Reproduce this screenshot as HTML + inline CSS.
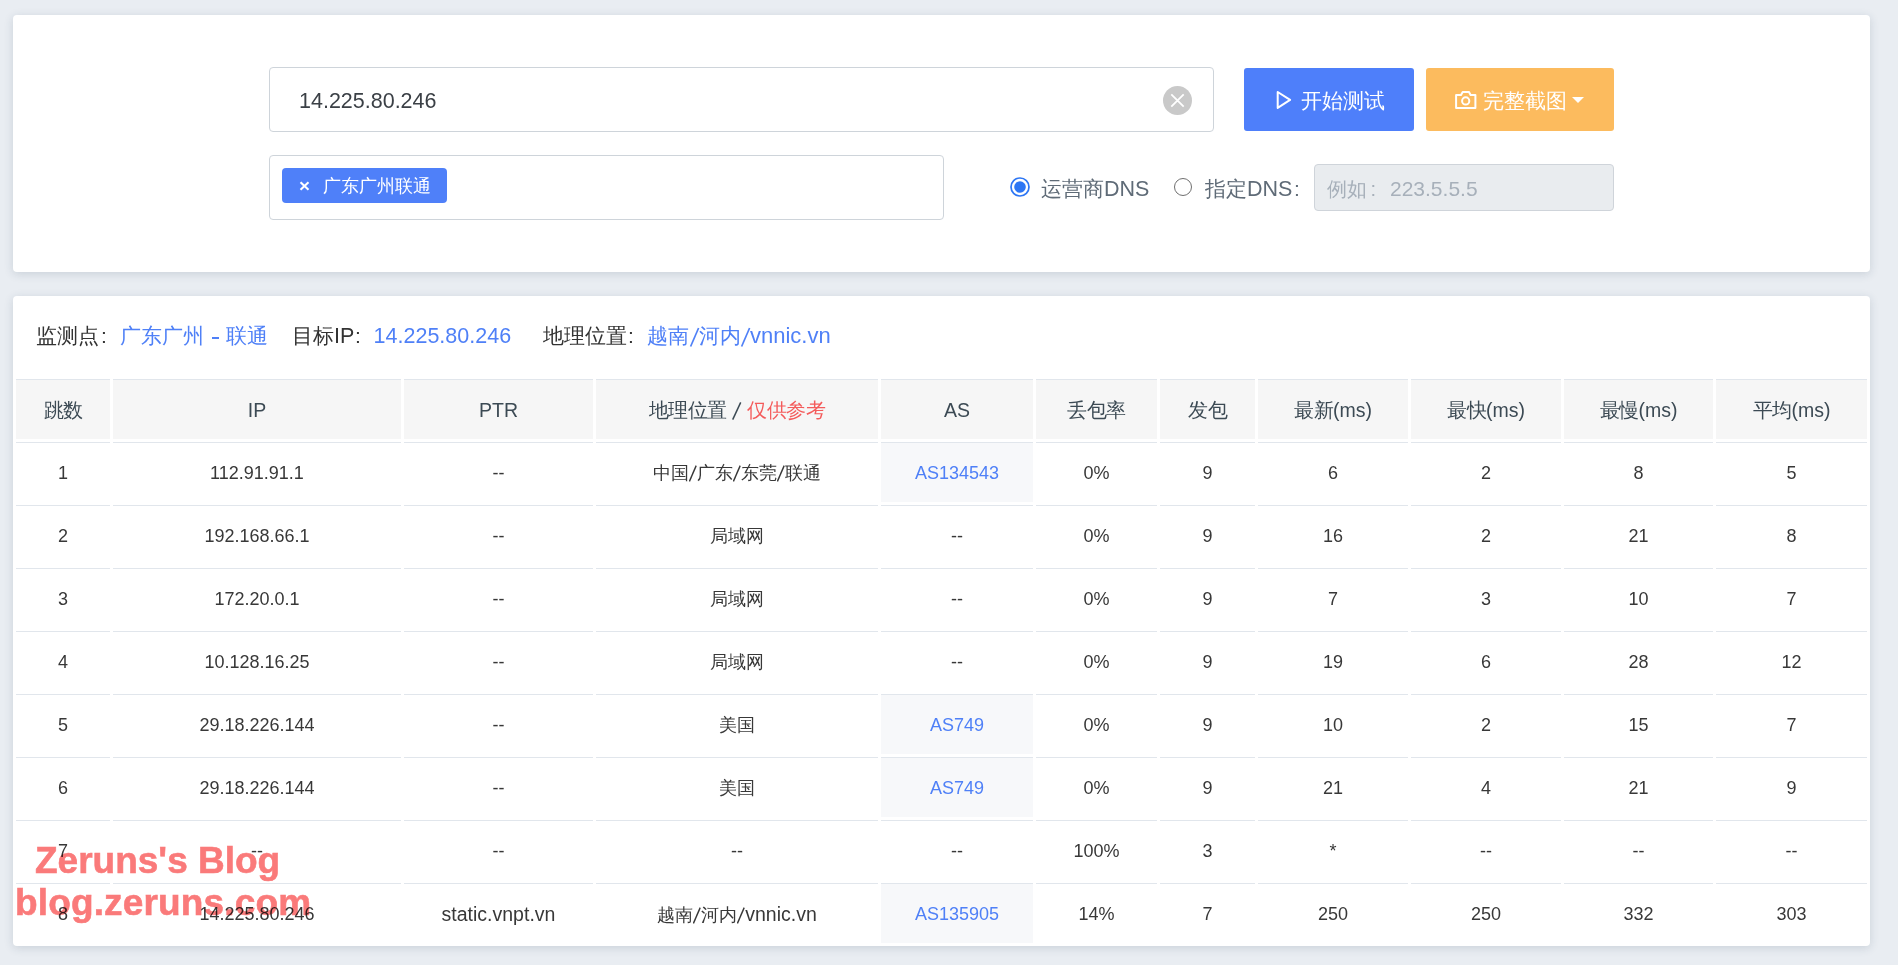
<!DOCTYPE html>
<html><head><meta charset="utf-8">
<style>
*{margin:0;padding:0;box-sizing:border-box}
html,body{width:1898px;height:965px;overflow:hidden}
body{background:#e9edf2;font-family:"Liberation Sans",sans-serif;color:#333;position:relative}
.card{position:absolute;left:13px;width:1857px;background:#fff;border-radius:4px;box-shadow:0 2px 10px rgba(40,60,90,.16)}
.card1{top:15px;height:257px}
.card2{top:296px;height:650px}
.abs{position:absolute;white-space:nowrap}
.inp{position:absolute;left:269px;top:67px;width:945px;height:65px;border:1px solid #ced4da;border-radius:4px;background:#fff}
.inp .val{position:absolute;left:29px;top:1px;line-height:64px;font-size:21.5px;color:#3b4046}
.clr{position:absolute;left:1163px;top:85.8px;width:29px;height:29px;border-radius:50%;background:#c9c9c9}
.btn{position:absolute;top:68px;height:63px;border-radius:3px;color:#fff;font-size:21px;line-height:63px}
.b1{left:1244px;width:170px;background:#4e7ffa}
.b2{left:1426px;width:188px;background:#fcbb5e}
.sel{position:absolute;left:269px;top:155px;width:675px;height:65px;border:1px solid #ced4da;border-radius:4px;background:#fff}
.tag{position:absolute;left:12px;top:12px;width:165px;height:35px;background:#4f80f9;border-radius:4px;color:#fff;font-size:18px;line-height:35px}
.radio{position:absolute;border-radius:50%}
.rtxt{position:absolute;top:173.5px;font-size:20px;line-height:30px;color:#5f6b77}
.dns{position:absolute;left:1314px;top:164px;width:300px;height:47px;background:#e9ecef;border:1px solid #cfd4da;border-radius:4px;color:#a7b0ba;font-size:20px;line-height:45px;padding-left:12px}
.info{position:absolute;line-height:30px;color:#333;white-space:nowrap}
.rt{color:#5f6b77}
.ph{color:#a7b0ba}
.slash{font-size:21.5px;transform:scaleX(1.5);transform-origin:0 50%}
.blue{color:#4f80f7}
.red{color:#f45b5b}
.c{position:absolute;height:60px;border-top:1px solid #e1e6ec;text-align:center;line-height:61px;white-space:nowrap}
.th{background:#f6f6f6;color:#3c4a54;font-size:19.5px}
.td{font-size:18px;color:#383838;background:#fff}
.as{background:#f7f8fa;color:#4f80f7}
.sl{vertical-align:-3px;margin:0 0.2px}
.hsl{vertical-align:-3px}
.lw{font-size:19.5px}
.wm{position:absolute;font-weight:bold;color:#fa7a7a;font-size:37px;-webkit-text-stroke:0.6px #fa7a7a;mix-blend-mode:multiply;white-space:nowrap;line-height:40px}
.k{display:inline-block;width:1em;text-align:center;font-style:normal}
</style></head><body>
<div class="card card1"></div>
<div class="card card2"></div>

<div class="inp"><div class="val">14.225.80.246</div></div>
<div class="clr"><svg width="29" height="29" viewBox="0 0 29 29"><path d="M8.3 8.3 L20.7 20.7 M20.7 8.3 L8.3 20.7" stroke="#fff" stroke-width="1.8"/></svg></div>

<div class="btn b1">
 <svg class="abs" style="left:31px;top:22px" width="18" height="20" viewBox="0 0 18 20"><path d="M2.7 2 L15.1 9.95 L2.7 17.9 Z" fill="none" stroke="#fff" stroke-width="2" stroke-linejoin="round"/></svg>
 <span class="abs" style="left:56.5px;top:1px"><i class="k">开</i><i class="k">始</i><i class="k">测</i><i class="k">试</i></span>
</div>
<div class="btn b2">
 <svg class="abs" style="left:28px;top:22px" width="24" height="21" viewBox="0 0 24 21"><path d="M2.1 5 H7 L8.7 2 H15 L16.6 5 H21.4 V18 H2.1 Z" fill="none" stroke="#fff" stroke-width="2" stroke-linejoin="round"/><circle cx="11.7" cy="10.9" r="3.6" fill="none" stroke="#fff" stroke-width="2"/></svg>
 <span class="abs" style="left:56.5px;top:0.5px"><i class="k">完</i><i class="k">整</i><i class="k">截</i><i class="k">图</i></span>
 <svg class="abs" style="left:146px;top:29px" width="12" height="6" viewBox="0 0 12 6"><path d="M0 0 H12 L6 6 Z" fill="#fff"/></svg>
</div>

<div class="sel"><div class="tag"><svg class="abs" style="left:17px;top:13px" width="11" height="10" viewBox="0 0 11 10"><path d="M1.5 1.3 L9.5 8.8 M9.5 1.3 L1.5 8.8" stroke="#fff" stroke-width="2.1"/></svg><span class="abs" style="left:41px;top:1px;font-size:18px"><i class="k">广</i><i class="k">东</i><i class="k">广</i><i class="k">州</i><i class="k">联</i><i class="k">通</i></span></div></div>

<svg style="position:absolute;left:1009.8px;top:176.9px" width="20" height="20" viewBox="0 0 20 20"><circle cx="10" cy="10" r="9" fill="none" stroke="#2d76f4" stroke-width="1.7"/><circle cx="10" cy="10" r="5.8" fill="#2d76f4"/></svg>
<div class="radio" style="left:1174px;top:178px;width:18px;height:18px;border:1.8px solid #6f6f6f"></div>
<div class="dns"></div>

<div class="info " style="left:36px;top:321px;font-size:21px"><i class="k">监</i><i class="k">测</i><i class="k">点</i></div>
<div class="info " style="left:101px;top:321px;font-size:21px">:</div>
<div class="info blue" style="left:120px;top:321px;font-size:21px"><i class="k">广</i><i class="k">东</i><i class="k">广</i><i class="k">州</i></div>
<div class="info blue" style="left:226px;top:321px;font-size:21px"><i class="k">联</i><i class="k">通</i></div>
<div class="info " style="left:292px;top:321px;font-size:21px"><i class="k">目</i><i class="k">标</i></div>
<div class="info " style="left:334px;top:321px;font-size:21.5px">IP</div>
<div class="info " style="left:355px;top:321px;font-size:21px">:</div>
<div class="info blue" style="left:373.6px;top:321px;font-size:21.5px">14.225.80.246</div>
<div class="info " style="left:543px;top:321px;font-size:21px"><i class="k">地</i><i class="k">理</i><i class="k">位</i><i class="k">置</i></div>
<div class="info " style="left:628px;top:321px;font-size:21px">:</div>
<div class="info blue" style="left:647px;top:321px;font-size:21px"><i class="k">越</i><i class="k">南</i></div>
<div class="info blue" style="left:699px;top:321px;font-size:21px"><i class="k">河</i><i class="k">内</i></div>
<div class="info blue" style="left:750px;top:321px;font-size:22px">vnnic.vn</div>
<div class="info rt" style="left:1041px;top:173.5px;font-size:21px"><i class="k">运</i><i class="k">营</i><i class="k">商</i></div>
<div class="info rt" style="left:1104px;top:173.5px;font-size:21.5px">DNS</div>
<div class="info rt" style="left:1205px;top:173.5px;font-size:21px"><i class="k">指</i><i class="k">定</i></div>
<div class="info rt" style="left:1247px;top:173.5px;font-size:21.5px">DNS</div>
<div class="info rt" style="left:1294px;top:173.5px;font-size:21px">:</div>
<div class="info ph" style="left:1327px;top:174px;font-size:20px"><i class="k">例</i><i class="k">如</i></div>
<div class="info ph" style="left:1370.5px;top:174px;font-size:20px">:</div>
<div class="info ph" style="left:1390px;top:174px;font-size:21px">223.5.5.5</div>
<div style="position:absolute;left:212px;top:337px;width:7px;height:2px;background:#4f80f7"></div>
<svg style="position:absolute;left:688px;top:326px" width="13" height="22"><path d="M2.6 20.5 L10.6 2" stroke="#4f80f7" stroke-width="1.7"/></svg>
<svg style="position:absolute;left:738.5px;top:326px" width="13" height="22"><path d="M2.6 20.5 L10.6 2" stroke="#4f80f7" stroke-width="1.7"/></svg>

<div class="c th" style="left:16px;top:379px;width:94px"><i class="k">跳</i><i class="k">数</i></div>
<div class="c th" style="left:113px;top:379px;width:288px">IP</div>
<div class="c th" style="left:404px;top:379px;width:189px">PTR</div>
<div class="c th" style="left:596px;top:379px;width:282px"><i class="k">地</i><i class="k">理</i><i class="k">位</i><i class="k">置</i> <svg class="hsl" width="9.4" height="18" viewBox="0 0 9.4 18"><path d="M0.7 17.6 L8.7 0.4" stroke="currentColor" stroke-width="1.5"/></svg> <span class="red"><i class="k">仅</i><i class="k">供</i><i class="k">参</i><i class="k">考</i></span></div>
<div class="c th" style="left:881px;top:379px;width:152px">AS</div>
<div class="c th" style="left:1036px;top:379px;width:121px"><i class="k">丢</i><i class="k">包</i><i class="k">率</i></div>
<div class="c th" style="left:1160px;top:379px;width:95px"><i class="k">发</i><i class="k">包</i></div>
<div class="c th" style="left:1258px;top:379px;width:150px"><i class="k">最</i><i class="k">新</i>(ms)</div>
<div class="c th" style="left:1411px;top:379px;width:150px"><i class="k">最</i><i class="k">快</i>(ms)</div>
<div class="c th" style="left:1564px;top:379px;width:149px"><i class="k">最</i><i class="k">慢</i>(ms)</div>
<div class="c th" style="left:1716px;top:379px;width:151px"><i class="k">平</i><i class="k">均</i>(ms)</div>
<div class="c td" style="left:16px;top:442px;width:94px">1</div>
<div class="c td" style="left:113px;top:442px;width:288px">112.91.91.1</div>
<div class="c td" style="left:404px;top:442px;width:189px">--</div>
<div class="c td" style="left:596px;top:442px;width:282px"><i class="k">中</i><i class="k">国</i><svg class="sl" width="7.6" height="17" viewBox="0 0 7.6 17"><path d="M0.4 16.4 L7.2 0.6" stroke="currentColor" stroke-width="1.4"/></svg><i class="k">广</i><i class="k">东</i><svg class="sl" width="7.6" height="17" viewBox="0 0 7.6 17"><path d="M0.4 16.4 L7.2 0.6" stroke="currentColor" stroke-width="1.4"/></svg><i class="k">东</i><i class="k">莞</i><svg class="sl" width="7.6" height="17" viewBox="0 0 7.6 17"><path d="M0.4 16.4 L7.2 0.6" stroke="currentColor" stroke-width="1.4"/></svg><i class="k">联</i><i class="k">通</i></div>
<div class="c td as" style="left:881px;top:442px;width:152px">AS134543</div>
<div class="c td" style="left:1036px;top:442px;width:121px">0%</div>
<div class="c td" style="left:1160px;top:442px;width:95px">9</div>
<div class="c td" style="left:1258px;top:442px;width:150px">6</div>
<div class="c td" style="left:1411px;top:442px;width:150px">2</div>
<div class="c td" style="left:1564px;top:442px;width:149px">8</div>
<div class="c td" style="left:1716px;top:442px;width:151px">5</div>
<div class="c td" style="left:16px;top:505px;width:94px">2</div>
<div class="c td" style="left:113px;top:505px;width:288px">192.168.66.1</div>
<div class="c td" style="left:404px;top:505px;width:189px">--</div>
<div class="c td" style="left:596px;top:505px;width:282px"><i class="k">局</i><i class="k">域</i><i class="k">网</i></div>
<div class="c td" style="left:881px;top:505px;width:152px">--</div>
<div class="c td" style="left:1036px;top:505px;width:121px">0%</div>
<div class="c td" style="left:1160px;top:505px;width:95px">9</div>
<div class="c td" style="left:1258px;top:505px;width:150px">16</div>
<div class="c td" style="left:1411px;top:505px;width:150px">2</div>
<div class="c td" style="left:1564px;top:505px;width:149px">21</div>
<div class="c td" style="left:1716px;top:505px;width:151px">8</div>
<div class="c td" style="left:16px;top:568px;width:94px">3</div>
<div class="c td" style="left:113px;top:568px;width:288px">172.20.0.1</div>
<div class="c td" style="left:404px;top:568px;width:189px">--</div>
<div class="c td" style="left:596px;top:568px;width:282px"><i class="k">局</i><i class="k">域</i><i class="k">网</i></div>
<div class="c td" style="left:881px;top:568px;width:152px">--</div>
<div class="c td" style="left:1036px;top:568px;width:121px">0%</div>
<div class="c td" style="left:1160px;top:568px;width:95px">9</div>
<div class="c td" style="left:1258px;top:568px;width:150px">7</div>
<div class="c td" style="left:1411px;top:568px;width:150px">3</div>
<div class="c td" style="left:1564px;top:568px;width:149px">10</div>
<div class="c td" style="left:1716px;top:568px;width:151px">7</div>
<div class="c td" style="left:16px;top:631px;width:94px">4</div>
<div class="c td" style="left:113px;top:631px;width:288px">10.128.16.25</div>
<div class="c td" style="left:404px;top:631px;width:189px">--</div>
<div class="c td" style="left:596px;top:631px;width:282px"><i class="k">局</i><i class="k">域</i><i class="k">网</i></div>
<div class="c td" style="left:881px;top:631px;width:152px">--</div>
<div class="c td" style="left:1036px;top:631px;width:121px">0%</div>
<div class="c td" style="left:1160px;top:631px;width:95px">9</div>
<div class="c td" style="left:1258px;top:631px;width:150px">19</div>
<div class="c td" style="left:1411px;top:631px;width:150px">6</div>
<div class="c td" style="left:1564px;top:631px;width:149px">28</div>
<div class="c td" style="left:1716px;top:631px;width:151px">12</div>
<div class="c td" style="left:16px;top:694px;width:94px">5</div>
<div class="c td" style="left:113px;top:694px;width:288px">29.18.226.144</div>
<div class="c td" style="left:404px;top:694px;width:189px">--</div>
<div class="c td" style="left:596px;top:694px;width:282px"><i class="k">美</i><i class="k">国</i></div>
<div class="c td as" style="left:881px;top:694px;width:152px">AS749</div>
<div class="c td" style="left:1036px;top:694px;width:121px">0%</div>
<div class="c td" style="left:1160px;top:694px;width:95px">9</div>
<div class="c td" style="left:1258px;top:694px;width:150px">10</div>
<div class="c td" style="left:1411px;top:694px;width:150px">2</div>
<div class="c td" style="left:1564px;top:694px;width:149px">15</div>
<div class="c td" style="left:1716px;top:694px;width:151px">7</div>
<div class="c td" style="left:16px;top:757px;width:94px">6</div>
<div class="c td" style="left:113px;top:757px;width:288px">29.18.226.144</div>
<div class="c td" style="left:404px;top:757px;width:189px">--</div>
<div class="c td" style="left:596px;top:757px;width:282px"><i class="k">美</i><i class="k">国</i></div>
<div class="c td as" style="left:881px;top:757px;width:152px">AS749</div>
<div class="c td" style="left:1036px;top:757px;width:121px">0%</div>
<div class="c td" style="left:1160px;top:757px;width:95px">9</div>
<div class="c td" style="left:1258px;top:757px;width:150px">21</div>
<div class="c td" style="left:1411px;top:757px;width:150px">4</div>
<div class="c td" style="left:1564px;top:757px;width:149px">21</div>
<div class="c td" style="left:1716px;top:757px;width:151px">9</div>
<div class="c td" style="left:16px;top:820px;width:94px">7</div>
<div class="c td" style="left:113px;top:820px;width:288px">--</div>
<div class="c td" style="left:404px;top:820px;width:189px">--</div>
<div class="c td" style="left:596px;top:820px;width:282px">--</div>
<div class="c td" style="left:881px;top:820px;width:152px">--</div>
<div class="c td" style="left:1036px;top:820px;width:121px">100%</div>
<div class="c td" style="left:1160px;top:820px;width:95px">3</div>
<div class="c td" style="left:1258px;top:820px;width:150px">*</div>
<div class="c td" style="left:1411px;top:820px;width:150px">--</div>
<div class="c td" style="left:1564px;top:820px;width:149px">--</div>
<div class="c td" style="left:1716px;top:820px;width:151px">--</div>
<div class="c td" style="left:16px;top:883px;width:94px">8</div>
<div class="c td" style="left:113px;top:883px;width:288px">14.225.80.246</div>
<div class="c td" style="left:404px;top:883px;width:189px"><span class="lw">static.vnpt.vn</span></div>
<div class="c td" style="left:596px;top:883px;width:282px"><i class="k">越</i><i class="k">南</i><svg class="sl" width="7.6" height="17" viewBox="0 0 7.6 17"><path d="M0.4 16.4 L7.2 0.6" stroke="currentColor" stroke-width="1.4"/></svg><i class="k">河</i><i class="k">内</i><svg class="sl" width="7.6" height="17" viewBox="0 0 7.6 17"><path d="M0.4 16.4 L7.2 0.6" stroke="currentColor" stroke-width="1.4"/></svg><span class="lw">vnnic.vn</span></div>
<div class="c td as" style="left:881px;top:883px;width:152px">AS135905</div>
<div class="c td" style="left:1036px;top:883px;width:121px">14%</div>
<div class="c td" style="left:1160px;top:883px;width:95px">7</div>
<div class="c td" style="left:1258px;top:883px;width:150px">250</div>
<div class="c td" style="left:1411px;top:883px;width:150px">250</div>
<div class="c td" style="left:1564px;top:883px;width:149px">332</div>
<div class="c td" style="left:1716px;top:883px;width:151px">303</div>

<div class="wm" style="left:35px;top:841px">Zeruns's Blog</div>
<div class="wm" style="left:15px;top:883px;letter-spacing:0.15px">blog.zeruns.com</div>
</body></html>
